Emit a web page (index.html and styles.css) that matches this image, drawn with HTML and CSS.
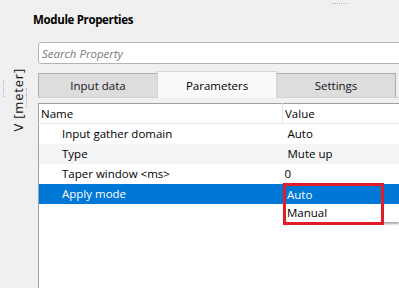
FILE: index.html
```html
<!DOCTYPE html>
<html lang="en">
<head>
    <meta charset="UTF-8">
    <meta name="viewport" content="width=device-width, initial-scale=1.0">
    <title>Module Properties</title>
    <link rel="stylesheet" href="styles.css">
</head>
<body>
    <div class="window">
        <aside class="axis">
            <span class="grip grip-outer"></span>
            <span class="axis-label">V [meter]</span>
            <span class="grip grip-inner"></span>
        </aside>

        <main class="panel">
            <div class="panel-head">
                <span class="grip-h"></span>
                <h1>Module Properties</h1>
            </div>

            <input class="search" type="text" placeholder="Search Property">

            <div class="tabs">
                <div class="tab">Input data</div>
                <div class="tab active">Parameters</div>
                <div class="tab">Settings</div>
            </div>

            <div class="pane">
                <table class="props">
                    <thead>
                        <tr>
                            <th class="col-name">Name</th>
                            <th class="col-value">Value</th>
                        </tr>
                    </thead>
                    <tbody>
                        <tr>
                            <td class="name">Input gather domain</td>
                            <td class="value">Auto</td>
                        </tr>
                        <tr class="alt">
                            <td class="name">Type</td>
                            <td class="value">Mute up</td>
                        </tr>
                        <tr>
                            <td class="name">Taper window &lt;ms&gt;</td>
                            <td class="value value-edit">0</td>
                        </tr>
                        <tr class="selected">
                            <td class="name">Apply mode</td>
                            <td class="value"></td>
                        </tr>
                        <tr class="filler">
                            <td></td>
                            <td></td>
                        </tr>
                    </tbody>
                </table>

                <ul class="dropdown">
                    <li class="option current">Auto</li>
                    <li class="option">Manual</li>
                </ul>
                <div class="highlight"></div>
            </div>
        </main>
    </div>
</body>
</html>
```

FILE: styles.css
```css
* {
    margin: 0;
    padding: 0;
    box-sizing: border-box;
}

html, body {
    height: 100%;
}

body {
    font-family: "Open Sans", "Noto Sans", sans-serif;
    font-size: 11.5px;
    color: #000;
    background-color: #f0f0f0;
    overflow: hidden;
}

.window {
    display: flex;
    height: 100%;
}

/* left axis strip with splitter grips */
.axis {
    width: 30px;
    flex-shrink: 0;
    display: flex;
    align-items: flex-start;
}

.grip {
    width: 1px;
    border-left: 1px dotted #b0b0b0;
}

.grip-outer {
    margin-left: 3px;
    margin-top: 80px;
    height: 17px;
}

.grip-inner {
    margin-left: 2px;
    margin-top: 88px;
    height: 20px;
}

.axis-label {
    margin-left: 9px;
    margin-top: 68px;
    writing-mode: vertical-rl;
    transform: rotate(180deg);
    font-size: 13px;
    line-height: 11px;
    letter-spacing: 0.8px;
    color: #111;
}

/* main property panel */
.panel {
    flex: 1;
    display: flex;
    flex-direction: column;
    min-width: 0;
    padding: 3px 0 0 8px;
}

.panel-head {
    display: flex;
    flex-direction: column;
}

.grip-h {
    align-self: flex-end;
    width: 16px;
    height: 1px;
    margin-right: 51px;
    border-top: 1px dotted #b8b8b8;
}

h1 {
    margin: 8px 0 0 -5px;
    font-size: 11.5px;
    font-weight: bold;
    line-height: 16px;
    letter-spacing: -0.35px;
    color: #000;
}

.search {
    margin-top: 14px;
    width: calc(100% + 10px);
    height: 22px;
    padding: 0 3px;
    border: 1px solid #b4b4b4;
    border-radius: 3px;
    background: #fff;
    font-family: inherit;
    font-size: 11.5px;
    outline: none;
}

.search::placeholder {
    color: #7a7a7a;
    font-style: italic;
}

.tabs {
    display: flex;
    align-items: flex-end;
    height: 26px;
    margin-top: 7px;
}

.tab {
    width: 120px;
    height: 24px;
    flex-shrink: 0;
    display: flex;
    align-items: center;
    justify-content: center;
    background: #dddddd;
    border: 1px solid #adadad;
    border-bottom: none;
    color: #1a1020;
}

.tab + .tab {
    margin-left: -1px;
}

.tab.active {
    height: 27px;
    margin-bottom: -1px;
    background: #f9f9f9;
    border-color: #d4d4d4;
    position: relative;
    z-index: 1;
    color: #000;
}

.pane {
    position: relative;
    flex: 1;
    border-top: 1px solid #d4d4d4;
    padding-top: 5px;
}

.props {
    width: 100%;
    height: 100%;
    border-collapse: collapse;
    table-layout: fixed;
    background: #fff;
    border-left: 1px solid #a0a0a0;
    border-top: 1px solid #a0a0a0;
}

.props th,
.props td {
    height: 20px;
    padding: 0;
    text-align: left;
    font-weight: normal;
    white-space: nowrap;
    overflow: hidden;
}

.props th {
    height: 20px;
    border-bottom: 1px solid #e5e5e5;
    padding-left: 2px;
}

.col-name {
    width: 244px;
    border-right: 1px solid #e5e5e5;
}

.col-value {
    padding-left: 2px;
}

.props td.name {
    padding-left: 23px;
}

.props td.value {
    padding-left: 5px;
}

.props td.value-edit {
    padding-left: 2px;
}

.props tr.alt td {
    background: #f5f5f5;
}

.props tr.selected td {
    background: #0078d7;
    color: #fff;
}

.props tr.filler td {
    height: auto;
}

/* open combo box list over the value cell */
.dropdown {
    position: absolute;
    left: 246px;
    top: 88px;
    right: 0;
    list-style: none;
    background: #fff;
    box-shadow: 0 2px 2px rgba(0, 0, 0, 0.35);
}

.option {
    height: 18px;
    line-height: 18px;
    padding-left: 3px;
}

.option.current {
    background: #0078d7;
    color: #fff;
}

.highlight {
    position: absolute;
    left: 245px;
    top: 85px;
    width: 101px;
    height: 42px;
    border: 3px solid #e21b2b;
}
```
